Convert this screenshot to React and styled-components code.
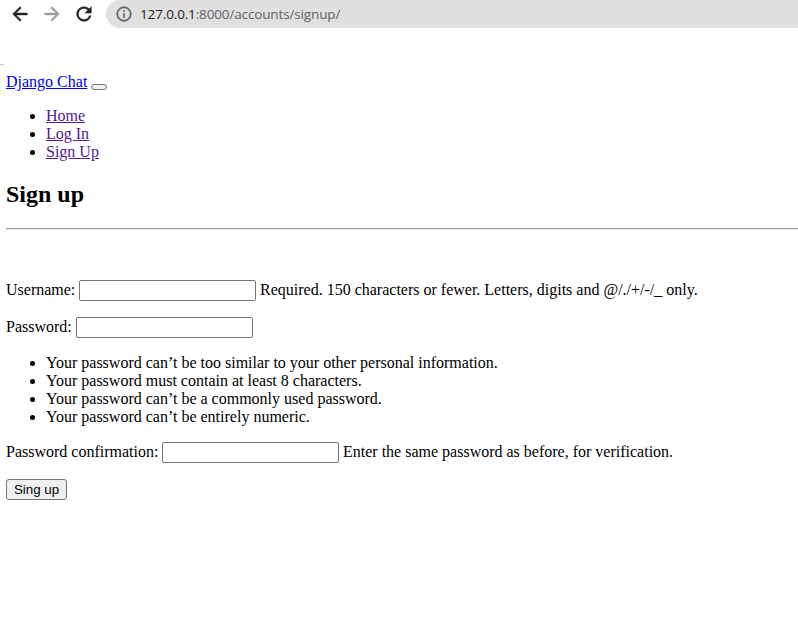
import React from "react";
import styled, { createGlobalStyle } from "styled-components";

const GlobalStyle = createGlobalStyle`
  * { box-sizing: border-box; }
  html, body { margin: 0; background: #fff; overflow: hidden; }
  body {
    font-family: "Liberation Serif", "Times New Roman", serif;
    font-size: 16px;
    line-height: 18px;
    color: #000;
  }
`;

const Window = styled.div`
  height: 632px;
  overflow: hidden;
`;

const Toolbar = styled.header`
  display: flex;
  align-items: center;
  height: 28px;
  padding-left: 9px;
`;

const ToolIcon = styled.svg`
  flex: none;
  width: 22px;
  height: 22px;
  margin-right: 10px;
  fill: ${(p) => p.$color};
  stroke: ${(p) => p.$color};
  stroke-width: 0.5;
`;

const AddressBar = styled.div`
  display: flex;
  flex: 1;
  align-items: center;
  height: 28px;
  margin-left: 1px;
  padding-left: 9px;
  border-radius: 14px 0 0 14px;
  background: #e0e0e0;
`;

const InfoIcon = styled.svg`
  width: 18px;
  height: 18px;
  fill: #5f6368;
  stroke: #5f6368;
  stroke-width: 0.3;
`;

const Url = styled.span`
  margin-left: 7px;
  font: 13.5px/20px "Open Sans", sans-serif;
  letter-spacing: -0.14px;
  white-space: nowrap;
  color: #5f6368;
`;

const Host = styled.span`
  color: #202124;
`;

const ToolbarEdge = styled.div`
  width: 4px;
  height: 1px;
  margin-top: 36px;
  background: #c8c8c8;
`;

const Page = styled.main`
  padding: 8px 0 0 6px;
`;

const Brand = styled.div`
  display: flex;
  height: 18px;
`;

const Link = styled.a`
  color: ${(p) => (p.$visited ? "#551a8b" : "#0000ee")};
  text-decoration: underline;
`;

const Toggler = styled.button`
  width: 16px;
  height: 6px;
  margin: 11px 0 0 4px;
  padding: 0;
  border: 1px solid #767676;
  border-radius: 3px;
  background: #efefef;
`;

const List = styled.ul`
  margin: 16px 0;
  padding-left: 40px;
`;

const Heading = styled.h2`
  margin: 20px 0 0;
  font-size: 24px;
  line-height: 27px;
`;

const Rule = styled.hr`
  height: 2px;
  margin: 20px 0 50px;
  border: 0;
  border-top: 1px solid #9a9a9a;
  border-bottom: 1px solid #eee;
`;

const Field = styled.div`
  display: flex;
  align-items: flex-start;
  height: 21px;
  margin-bottom: 16px;
  line-height: 19px;
  white-space: nowrap;
`;

const Label = styled.label`
  width: ${(p) => p.$width}px;
`;

const Input = styled.input`
  width: 177px;
  height: 21px;
  margin: 0 4px 0 0;
  padding: 1px 2px;
  border: 1px solid #767676;
  border-radius: 2px;
  background: #fff;
`;

const Submit = styled.button`
  display: block;
  width: 61px;
  height: 21px;
  padding: 0;
  border: 1px solid #767676;
  border-radius: 3px;
  background: #efefef;
  color: #000;
  font: 13.333px/19px "Liberation Sans", Arial, sans-serif;
`;

const navLinks = ["Home", "Log In", "Sign Up"];

const passwordRules = [
  "Your password can’t be too similar to your other personal information.",
  "Your password must contain at least 8 characters.",
  "Your password can’t be a commonly used password.",
  "Your password can’t be entirely numeric.",
];

export default function App() {
  return (
    <Window>
      <GlobalStyle />
      <Toolbar>
        <ToolIcon viewBox="0 0 24 24" $color="#202124">
          <path d="M20 11H7.83l5.59-5.59L12 4l-8 8 8 8 1.41-1.41L7.83 13H20v-2z" />
        </ToolIcon>
        <ToolIcon viewBox="0 0 24 24" $color="#9a9b9d">
          <path d="M12 4l-1.41 1.41L16.17 11H4v2h12.17l-5.58 5.59L12 20l8-8z" />
        </ToolIcon>
        <ToolIcon viewBox="0 0 24 24" $color="#202124">
          <path d="M17.65 6.35A7.96 7.96 0 0 0 12 4a8 8 0 1 0 7.73 10h-2.08A6 6 0 1 1 12 6c1.66 0 3.14.69 4.22 1.78L13 11h7V4z" />
        </ToolIcon>
        <AddressBar>
          <InfoIcon viewBox="0 0 24 24">
            <path d="M11 7h2v2h-2zm0 4h2v6h-2zm1-9a10 10 0 1 0 0 20 10 10 0 0 0 0-20zm0 18a8 8 0 1 1 0-16 8 8 0 0 1 0 16z" />
          </InfoIcon>
          <Url><Host>127.0.0.1</Host>:8000/accounts/signup/</Url>
        </AddressBar>
      </Toolbar>
      <ToolbarEdge />
      <Page>
        <nav>
          <Brand>
            <Link href="#">Django Chat</Link>
            <Toggler type="button" aria-label="Toggle navigation" />
          </Brand>
          <List>
            {navLinks.map((name) => (
              <li key={name}><Link href="#" $visited>{name}</Link></li>
            ))}
          </List>
        </nav>
        <Heading>Sign up</Heading>
        <Rule />
        <form>
          <Field>
            <Label $width={73} htmlFor="username">Username:</Label>
            <Input id="username" />
            <span>Required. 150 characters or fewer. Letters, digits and @/./+/-/_ only.</span>
          </Field>
          <Field>
            <Label $width={70} htmlFor="password">Password:</Label>
            <Input id="password" type="password" />
          </Field>
          <List>
            {passwordRules.map((rule) => <li key={rule}>{rule}</li>)}
          </List>
          <Field>
            <Label $width={156} htmlFor="confirmation">Password confirmation:</Label>
            <Input id="confirmation" type="password" />
            <span>Enter the same password as before, for verification.</span>
          </Field>
          <Submit type="button">Sing up</Submit>
        </form>
      </Page>
    </Window>
  );
}
